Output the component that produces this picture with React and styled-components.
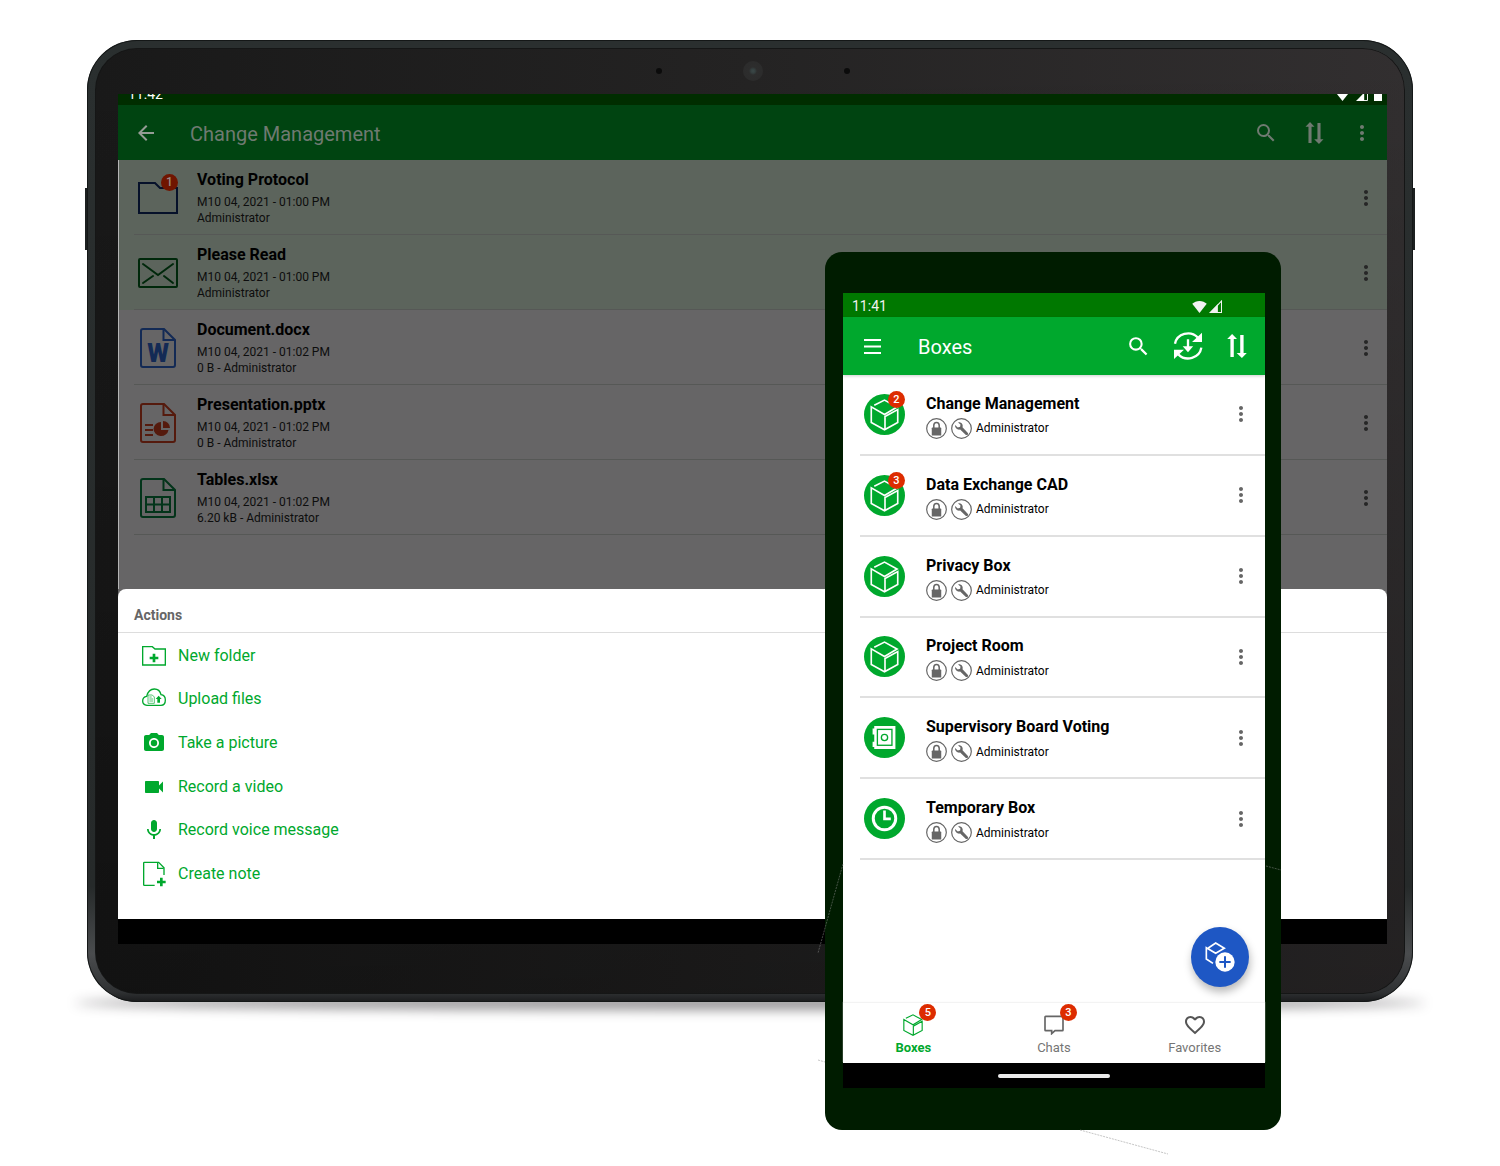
import React from "react";
import styled, { createGlobalStyle, css } from "styled-components";
import {
  MdArrowBack,
  MdSearch,
  MdMoreVert,
  MdPhotoCamera,
  MdVideocam,
  MdMic,
  MdFavoriteBorder,
} from "react-icons/md";

const GREEN = "#00a82d";
const GREY = "#666666";

const GlobalStyle = createGlobalStyle`
  *, *::before, *::after { box-sizing: border-box; }
  body {
    margin: 0;
    background: #ffffff;
    font-family: Roboto, "Liberation Sans", sans-serif;
    color: #000000;
  }
  ul { list-style: none; margin: 0; padding: 0; }
  h1, h2, h3, p { margin: 0; font-weight: 400; }
  svg { display: block; flex: none; }
`;

/* ---------- stage and tablet ---------- */

const Stage = styled.main`
  position: relative;
  padding: 40px 87px 165px;
`;

const sideKey = css`
  content: "";
  position: absolute;
  top: 148px;
  width: 2px;
  height: 62px;
  background: #1c2020;
`;

const Tablet = styled.section`
  position: relative;
  border-radius: 50px;
  padding: 8px;
  background: linear-gradient(180deg, #2a2f2f 0%, #262a2a 88%, #4a4c4e 95%, #2f3133 99%, #1a1b1c 100%);
  box-shadow: inset 0 0 0 1px #141717;

  &::before { ${sideKey} left: -2px; }
  &::after { ${sideKey} right: -2px; }
`;

const TabletShadow = styled.div`
  position: absolute;
  left: 75px;
  right: 75px;
  top: 996px;
  height: 14px;
  border-radius: 50%;
  background: rgba(20, 15, 20, 0.45);
  filter: blur(6px);
`;

const Bezel = styled.div`
  border-radius: 42px;
  padding: 0 18px 50px 23px;
  background:
    linear-gradient(180deg, rgba(0, 0, 0, 0) 0%, rgba(0, 0, 0, 0.3) 100%),
    linear-gradient(90deg, #191919 0%, #242323 50%, #322f30 100%);
  box-shadow: inset 0 0 0 1px #151616;
`;

const CameraRow = styled.div`
  height: 46px;
  display: flex;
  align-items: center;
  justify-content: center;
  gap: 81px;
`;

const Sensor = styled.span`
  width: 6px;
  height: 6px;
  border-radius: 50%;
  background: #0b0b0b;
`;

const Lens = styled.span`
  width: 20px;
  height: 20px;
  border-radius: 50%;
  background: radial-gradient(circle, #3c4848 0, #354040 2px, #2d2d2d 4px, #2b2b2b 100%);
`;

const TabletScreen = styled.div`
  overflow: hidden;
  background: #666566;
`;

const TabletStatus = styled.div`
  height: 11px;
  overflow: hidden;
  display: flex;
  align-items: flex-end;
  justify-content: space-between;
  padding: 0 5px 4px 10px;
  background: #002d00;
  color: #ffffff;
  font-size: 14px;
  line-height: 14px;
`;

const StatusIcons = styled.span`
  display: flex;
  align-items: flex-end;
  gap: ${(p) => p.$gap}px;
`;

const Bar = styled.header`
  display: flex;
  align-items: center;
`;

const TabletBar = styled(Bar)`
  height: 55px;
  padding: 0 1px 0 4px;
  background: #004411;
  color: #6f7a71;
`;

const BarTitle = styled.h1`
  flex: 1;
  margin-left: ${(p) => p.$indent}px;
  padding-top: 2px;
  font-size: 20px;
  line-height: 28px;
`;

const IconButton = styled.button`
  width: ${(p) => p.$w || 48}px;
  height: 48px;
  padding: 0;
  border: 0;
  background: none;
  color: inherit;
  display: flex;
  align-items: center;
  justify-content: center;
  cursor: pointer;
`;

const BackButton = styled(IconButton)`
  color: #959c96;
`;

const DotsButton = styled(IconButton)`
  width: 24px;
  color: ${(p) => p.$color};
`;

const FileList = styled.ul`
  border-left: 1px solid #b5b5b5;
  padding-bottom: 54px;
`;

const FileRow = styled.li`
  padding-left: 15px;
  background: ${(p) => (p.$unread ? "#5c645c" : "#666566")};
`;

const FileInner = styled.div`
  height: 75px;
  display: flex;
  align-items: center;
  padding: 1px 9px 0 0;
  border-bottom: 1px solid #565856;
`;

const FileIcon = styled.span`
  position: relative;
  width: 48px;
  display: flex;
  justify-content: center;
`;

const FileText = styled.div`
  flex: 1;
  margin-left: 15px;
  color: #0d0d0d;
`;

const FileName = styled.h3`
  font-size: 16px;
  line-height: 22px;
  font-weight: 700;
  color: #000000;
  margin-bottom: 3px;
`;

const FileMeta = styled.p`
  font-size: 12px;
  line-height: 16px;
`;

const Sheet = styled.section`
  background: #ffffff;
  border-radius: 8px 8px 0 0;
  padding-bottom: 23px;
`;

const SheetTitle = styled.h2`
  height: 44px;
  padding: 8px 16px 0;
  border-bottom: 1px solid #dddddd;
  font-size: 14px;
  line-height: 36px;
  font-weight: 700;
  color: ${GREY};
`;

const Actions = styled.ul`
  height: 263px;
  padding-top: 1px;
  display: grid;
  grid-auto-rows: 1fr;
`;

const Action = styled.button`
  width: 100%;
  height: 100%;
  padding: 0 24px;
  border: 0;
  background: none;
  display: flex;
  align-items: center;
  gap: 12px;
  font: 400 16px/24px Roboto, "Liberation Sans", sans-serif;
  color: ${GREEN};
  text-align: left;
  cursor: pointer;
`;

const SystemBar = styled.div`
  height: 25px;
  background: #000000;
  display: flex;
  align-items: center;
  justify-content: center;
`;

const HomePill = styled.span`
  width: 112px;
  height: 4px;
  border-radius: 2px;
  background: #ebebeb;
`;

/* ---------- phone ---------- */

const Phone = styled.section`
  position: absolute;
  top: 252px;
  right: 219px;
  width: 456px;
  padding: 41px 16px 42px 18px;
  border-radius: 17px;
  background: #001c00;
`;

const Traces = styled.svg`
  position: absolute;
  left: -8px;
  top: 612px;
  overflow: visible;
  pointer-events: none;
`;

const PhoneScreen = styled.div`
  position: relative;
  background: #ffffff;
`;

const PhoneStatus = styled.div`
  height: 24px;
  display: flex;
  align-items: center;
  justify-content: space-between;
  padding: 2px 43px 0 9px;
  background: #007800;
  color: #f2f2f2;
  font-size: 14px;
  line-height: 22px;
`;

const PhoneBar = styled(Bar)`
  height: 58px;
  padding: 0 4px 0 5px;
  background: ${GREEN};
  color: #ffffff;
  box-shadow: 0 1px 3px rgba(0, 0, 0, 0.2);
`;

const BoxList = styled.ul`
  height: 485px;
  display: grid;
  grid-auto-rows: 1fr;
  padding-left: 17px;
`;

const BoxRow = styled.li`
  display: flex;
  align-items: center;
  padding: 0 12px 0 4px;
  border-bottom: 2px solid #e0e0e0;
`;

const Avatar = styled.span`
  position: relative;
  width: 41px;
  height: 41px;
`;

const Badge = styled.span`
  position: absolute;
  top: ${(p) => p.$top}px;
  right: ${(p) => p.$right}px;
  width: 17px;
  height: 17px;
  border-radius: 50%;
  background: ${(p) => (p.$dim ? "#701500" : "#dd2c00")};
  color: ${(p) => (p.$dim ? "#9a8a86" : "#ffffff")};
  font-size: ${(p) => (p.$dim ? 12 : 11)}px;
  line-height: 17px;
  font-weight: 500;
  text-align: center;
`;

const BoxText = styled.div`
  flex: 1;
  margin-left: 21px;
  padding-top: 2px;
`;

const BoxName = styled.h3`
  font-size: 16px;
  line-height: 24px;
  font-weight: 700;
  margin-bottom: 2px;
`;

const BoxMeta = styled.p`
  display: flex;
  align-items: center;
  gap: 4px;
  font-size: 12px;
  line-height: 20px;
`;

const Empty = styled.div`
  height: 143px;
  display: flex;
  align-items: flex-end;
  justify-content: flex-end;
  padding: 0 16px 16px;
`;

const Fab = styled.button`
  width: 58px;
  height: 60px;
  padding: 0;
  border: 0;
  border-radius: 50%;
  background: #1e57c4;
  display: flex;
  align-items: center;
  justify-content: center;
  box-shadow: 1px 5px 9px rgba(0, 0, 0, 0.28);
  cursor: pointer;
`;

const Tabs = styled.nav`
  height: 60px;
  display: grid;
  grid-template-columns: repeat(3, 1fr);
  box-shadow: 0 -1px 1px #f3f3f3;
`;

const Tab = styled.a`
  display: flex;
  flex-direction: column;
  align-items: center;
  padding-top: 10px;
  gap: 1px;
  font-size: 13px;
  line-height: 20px;
  font-weight: ${(p) => (p.$active ? 700 : 400)};
  color: ${(p) => (p.$active ? GREEN : "#757575")};
  text-decoration: none;
`;

const TabIcon = styled.span`
  position: relative;
  height: 24px;
  width: 24px;
  display: flex;
  align-items: center;
  justify-content: center;
  color: ${(p) => (p.$active ? GREEN : "#555555")};
`;

/* ---------- drawings ---------- */

const WifiIcon = ({ s = 15 }) => (
  <svg width={s} height={s * 0.8} viewBox="0 0 46 38" fill="currentColor">
    <path d="M23 38 0 9C6 4 14 0 23 0s17 4 23 9Z" />
  </svg>
);

const SignalIcon = ({ s = 13 }) => (
  <svg width={s} height={s} viewBox="0 0 38 38">
    <path d="M36.500 3v33.500H5Z" fill="none" stroke="currentColor" strokeWidth="3" />
    <path d="M0 38 26 12V38Z" fill="currentColor" />
  </svg>
);

const BatteryIcon = () => (
  <svg width="8" height="12" viewBox="0 0 8 12" fill="currentColor">
    <path d="M2.500 0h3v1.500H8V12H0V1.500h2.500Z" />
  </svg>
);

const SortIcon = ({ w = 20, h = 24 }) => (
  <svg width={w} height={h} viewBox="0 0 58 71" fill="currentColor">
    <path d="M14.500 0 29 15H19.500v53h-10V15H0ZM38.500 3h10v53H58L43.500 71 28 56h10.500Z" />
  </svg>
);

const MenuIcon = () => (
  <svg width="17" height="15" viewBox="0 0 17 15" fill="currentColor">
    <path d="M0 0h17v2H0zM0 6.500h17v2H0zM0 13h17v2H0z" />
  </svg>
);

const SyncIcon = () => (
  <svg width="30" height="30" viewBox="0 0 90 90">
    <g fill="none" stroke="currentColor" strokeWidth="7">
      <path d="M6 38A40 38 0 0 1 74 19" />
      <path d="M85 50A40 38 0 0 1 16 70" />
    </g>
    <path d="M87 5V33H57ZM3 84V56H33Z" fill="currentColor" />
    <path d="M41.500 25h7v21h12L45 64 29 46h12.500Z" fill="currentColor" />
  </svg>
);

const CubePath = ({ w }) => (
  <path
    d="M31 34 62 18.500 100 39.500 62 62 22 39V86.500L62 108 102 86.500V47L63.500 68V106"
    fill="none"
    stroke="currentColor"
    strokeWidth={w}
  />
);

const CubeAvatar = () => (
  <svg width="41" height="41" viewBox="0 0 124 124" color="#fff">
    <circle cx="62" cy="62" r="62" fill={GREEN} />
    <CubePath w="5" />
  </svg>
);

const SafeAvatar = () => (
  <svg width="41" height="41" viewBox="0 0 124 124">
    <circle cx="62" cy="62" r="62" fill={GREEN} />
    <path d="M31 27H95V97H31V91H26V75H31V53H26V35H31Z" fill="#fff" />
    <rect x="40.500" y="37.500" width="44" height="48" fill="none" stroke={GREEN} strokeWidth="4" />
    <circle cx="62" cy="62" r="9.500" fill="none" stroke={GREEN} strokeWidth="4" />
  </svg>
);

const ClockAvatar = () => (
  <svg width="41" height="41" viewBox="0 0 124 124" fill="none" stroke="#fff">
    <circle cx="62" cy="62" r="62" fill={GREEN} stroke="none" />
    <circle cx="62" cy="62" r="34" strokeWidth="9" />
    <path d="M62 38V63H81" strokeWidth="8" />
  </svg>
);

const LockIcon = () => (
  <svg width="21" height="21" viewBox="0 0 62 62">
    <circle cx="31" cy="31" r="29" fill="none" stroke="#666" strokeWidth="3.500" />
    <path d="M23 30V22a8 9 0 0 1 16 0v8" fill="none" stroke="#666" strokeWidth="4.500" />
    <rect x="17" y="28" width="28" height="24" rx="2" fill="#666" />
  </svg>
);

const WrenchIcon = () => (
  <svg width="21" height="21" viewBox="0 0 62 62">
    <circle cx="31" cy="31" r="29" fill="none" stroke="#666" strokeWidth="3.500" />
    <path
      d="M21 13C29 11 37 18 34 27L50 44C52 48 48 52 44 50L27 34C19 36 11 29 12 21L20 28 27 26 28 19Z"
      fill="#666"
    />
  </svg>
);

const FolderIcon = () => (
  <svg width="40" height="32" viewBox="0 0 40 32" fill="none" stroke="#06112a" strokeWidth="2">
    <path d="M1 1H17L22 6H39V31H1Z" />
  </svg>
);

const MailIcon = () => (
  <svg width="40" height="30" viewBox="0 0 40 30" fill="none" stroke="#00280b" strokeWidth="2">
    <rect x="1" y="1" width="38" height="28" rx="1" />
    <path d="M5 6 20 17 35 6M5 25 15 18M35 25 26 18" strokeLinecap="round" />
  </svg>
);

const Sheetlet = ({ color, children }) => (
  <svg width="36" height="40" viewBox="0 0 36 40" fill="none" stroke={color} strokeWidth="2">
    <path d="M3 1H24L35 12V37a2 2 0 0 1-2 2H3a2 2 0 0 1-2-2V3a2 2 0 0 1 2-2Z" />
    <path d="M23.500 1V12H35" />
    {children}
  </svg>
);

const WordIcon = () => (
  <Sheetlet color="#132a55">
    <text
      x="18"
      y="34"
      textAnchor="middle"
      fontFamily="Roboto, sans-serif"
      fontWeight="900"
      fontSize="25"
      fill="#132a55"
      stroke="none"
    >
      W
    </text>
  </Sheetlet>
);

const SlidesIcon = () => (
  <Sheetlet color="#551a0d">
    <path d="M5 22h8M5 27h8M5 32h8" />
    <path d="M21 19V27H28.500A7.500 7 0 1 1 21 19Z" fill="#551a0d" stroke="none" />
    <path d="M23 18A7 7 0 0 1 30 25H23Z" fill="#551a0d" stroke="none" />
  </Sheetlet>
);

const TableIcon = () => (
  <Sheetlet color="#03341a">
    <path d="M6 19H30V34H6ZM6 26.500H30M14 19V34M22 19V34" />
  </Sheetlet>
);

const NewFolderIcon = () => (
  <svg width="24" height="24" viewBox="0 0 72 72" fill="none" stroke={GREEN}>
    <path d="M2 8H31L39 15H70V63H2Z" strokeWidth="4" />
    <path d="M36 29V55M23 42H49" strokeWidth="8" />
  </svg>
);

const UploadIcon = () => (
  <svg width="24" height="24" viewBox="0 0 72 72" fill="none" stroke={GREEN}>
    <path
      d="M15 55C6 54 2 49 2 42C2 34 8 29 14 28C17 16 25 6 37 6C49 6 55 14 57 23C65 24 70 31 70 39C70 48 65 55 57 55Z"
      strokeWidth="4"
    />
    <path d="M18 24H31L37 30V49H18ZM22 30H29M22 36H33M22 42H33" strokeWidth="2" />
    <path d="M50 26 59 36H54V47H46V36H41Z" fill={GREEN} stroke="none" />
  </svg>
);

const NoteIcon = () => (
  <svg width="24" height="26" viewBox="0 0 72 78" fill="none" stroke={GREEN}>
    <path d="M38 73H7a2 2 0 0 1-2-2V6a2 2 0 0 1 2-2H50L66 20V42" strokeWidth="4" />
    <path d="M47 4V22H65" strokeWidth="4" />
    <path d="M58 50V76M45 63H71" strokeWidth="8" />
  </svg>
);

const BoxTabIcon = () => (
  <svg width="20" height="22" viewBox="19 15 86 96" color={GREEN}>
    <CubePath w="5" />
  </svg>
);

const ChatIcon = () => (
  <svg width="20" height="20" viewBox="0 0 60 60" fill="none" stroke={GREY} strokeWidth="5">
    <path d="M5 4H55a2 2 0 0 1 2 2V45a2 2 0 0 1-2 2H33L23 56V47H5a2 2 0 0 1-2-2V6a2 2 0 0 1 2-2Z" />
  </svg>
);

const AddBoxIcon = () => (
  <svg width="30" height="32" viewBox="0 0 90 96" fill="none" stroke="#fff" strokeWidth="5">
    <path d="M10 21 32 6 58 22 32 37 4 20V54L24 67" />
    <circle cx="60" cy="63" r="29" fill="#fff" stroke="none" />
    <path d="M60 46V80M43 63H77" stroke="#1e57c4" strokeWidth="6" />
  </svg>
);

/* ---------- data ---------- */

const files = [
  { name: "Voting Protocol", date: "M10 04, 2021 - 01:00 PM", meta: "Administrator", Icon: FolderIcon, unread: true, badge: 1 },
  { name: "Please Read", date: "M10 04, 2021 - 01:00 PM", meta: "Administrator", Icon: MailIcon, unread: true },
  { name: "Document.docx", date: "M10 04, 2021 - 01:02 PM", meta: "0 B - Administrator", Icon: WordIcon },
  { name: "Presentation.pptx", date: "M10 04, 2021 - 01:02 PM", meta: "0 B - Administrator", Icon: SlidesIcon },
  { name: "Tables.xlsx", date: "M10 04, 2021 - 01:02 PM", meta: "6.20 kB - Administrator", Icon: TableIcon },
];

const actions = [
  { label: "New folder", icon: <NewFolderIcon /> },
  { label: "Upload files", icon: <UploadIcon /> },
  { label: "Take a picture", icon: <MdPhotoCamera size={24} /> },
  { label: "Record a video", icon: <MdVideocam size={24} /> },
  { label: "Record voice message", icon: <MdMic size={24} /> },
  { label: "Create note", icon: <NoteIcon /> },
];

const boxes = [
  { name: "Change Management", Icon: CubeAvatar, badge: 2 },
  { name: "Data Exchange CAD", Icon: CubeAvatar, badge: 3 },
  { name: "Privacy Box", Icon: CubeAvatar },
  { name: "Project Room", Icon: CubeAvatar },
  { name: "Supervisory Board Voting", Icon: SafeAvatar },
  { name: "Temporary Box", Icon: ClockAvatar },
];

const tabs = [
  { label: "Boxes", icon: <BoxTabIcon />, badge: 5, active: true },
  { label: "Chats", icon: <ChatIcon />, badge: 3 },
  { label: "Favorites", icon: <MdFavoriteBorder size={24} /> },
];

function TabletApp() {
  return (
    <Tablet>
      <Bezel>
        <CameraRow>
          <Sensor />
          <Lens />
          <Sensor />
        </CameraRow>
        <TabletScreen>
          <TabletStatus>
            <span>11:42</span>
            <StatusIcons $gap={6}>
              <WifiIcon />
              <SignalIcon s={12} />
              <BatteryIcon />
            </StatusIcons>
          </TabletStatus>
          <TabletBar>
            <BackButton aria-label="Back">
              <MdArrowBack size={24} />
            </BackButton>
            <BarTitle $indent={20}>Change Management</BarTitle>
            <IconButton aria-label="Search"><MdSearch size={24} /></IconButton>
            <IconButton aria-label="Sort"><SortIcon w={19} h={22} /></IconButton>
            <IconButton aria-label="More"><MdMoreVert size={24} /></IconButton>
          </TabletBar>
          <FileList>
            {files.map(({ name, date, meta, Icon, unread, badge }) => (
              <FileRow key={name} $unread={unread}>
                <FileInner>
                  <FileIcon>
                    <Icon />
                    {badge && <Badge $dim $top={-8} $right={4}>{badge}</Badge>}
                  </FileIcon>
                  <FileText>
                    <FileName>{name}</FileName>
                    <FileMeta>{date}</FileMeta>
                    <FileMeta>{meta}</FileMeta>
                  </FileText>
                  <DotsButton $color="#262626" aria-label={`Options for ${name}`}>
                    <MdMoreVert size={24} />
                  </DotsButton>
                </FileInner>
              </FileRow>
            ))}
          </FileList>
          <Sheet>
            <SheetTitle>Actions</SheetTitle>
            <Actions>
              {actions.map(({ label, icon }) => (
                <li key={label}>
                  <Action>
                    {icon}
                    {label}
                  </Action>
                </li>
              ))}
            </Actions>
          </Sheet>
          <SystemBar />
        </TabletScreen>
      </Bezel>
    </Tablet>
  );
}

function PhoneApp() {
  return (
    <Phone>
      <PhoneScreen>
        <PhoneStatus>
          <span>11:41</span>
          <StatusIcons $gap={2}>
            <WifiIcon />
            <SignalIcon />
          </StatusIcons>
        </PhoneStatus>
        <PhoneBar>
          <IconButton aria-label="Menu"><MenuIcon /></IconButton>
          <BarTitle as="h2" $indent={22}>Boxes</BarTitle>
          <IconButton $w={49} aria-label="Search"><MdSearch size={25} /></IconButton>
          <IconButton $w={49} aria-label="Synchronize"><SyncIcon /></IconButton>
          <IconButton $w={49} aria-label="Sort"><SortIcon /></IconButton>
        </PhoneBar>
        <BoxList>
          {boxes.map(({ name, Icon, badge }) => (
            <BoxRow key={name}>
              <Avatar>
                <Icon />
                {badge && <Badge $top={-3} $right={0}>{badge}</Badge>}
              </Avatar>
              <BoxText>
                <BoxName>{name}</BoxName>
                <BoxMeta>
                  <LockIcon />
                  <WrenchIcon />
                  Administrator
                </BoxMeta>
              </BoxText>
              <DotsButton $color="#666666" aria-label={`Options for ${name}`}>
                <MdMoreVert size={24} />
              </DotsButton>
            </BoxRow>
          ))}
        </BoxList>
        <Empty>
          <Fab aria-label="Add box"><AddBoxIcon /></Fab>
        </Empty>
        <Tabs>
          {tabs.map(({ label, icon, badge, active }) => (
            <Tab key={label} href="#" $active={active}>
              <TabIcon $active={active}>
                {icon}
                {badge && <Badge $top={-9} $right={-11}>{badge}</Badge>}
              </TabIcon>
              {label}
            </Tab>
          ))}
        </Tabs>
        <SystemBar>
          <HomePill />
        </SystemBar>
      </PhoneScreen>
      <Traces width="352" height="292" viewBox="0 0 352 292" fill="none" stroke="#8c8c8c" strokeWidth="1" strokeDasharray="2 1" opacity="0.5">
        <path d="M26 0 1 89M1 196 8 198M263 266 351 290M449 2 464 6" />
      </Traces>
    </Phone>
  );
}

export default function App() {
  return (
    <>
      <GlobalStyle />
      <Stage>
        <TabletShadow />
        <TabletApp />
        <PhoneApp />
      </Stage>
    </>
  );
}
